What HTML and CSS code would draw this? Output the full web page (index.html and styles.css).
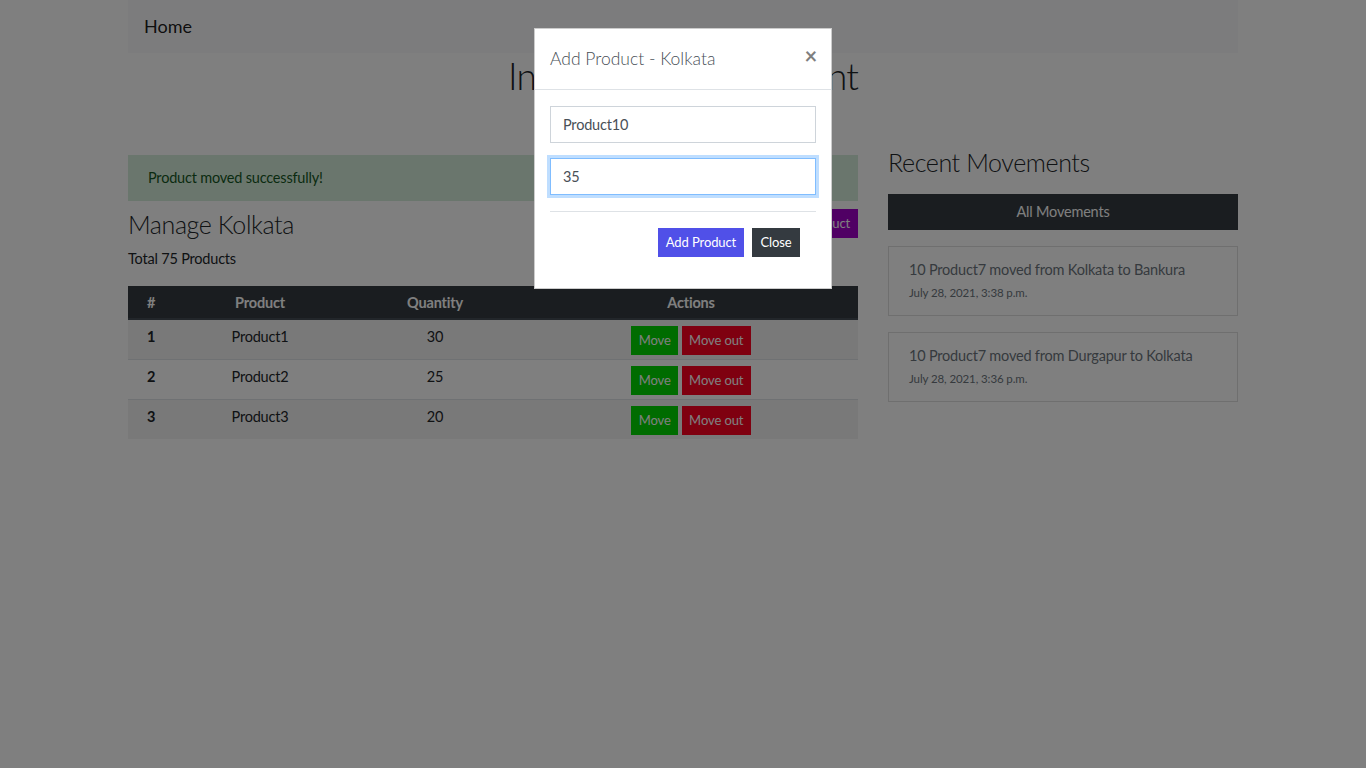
FILE: index.html
```html
<!DOCTYPE html>
<html lang="en">
<head>
<meta charset="utf-8">
<title>Inventory Management</title>
<link rel="stylesheet" href="styles.css">
</head>
<body>
<div class="container">
  <nav class="navbar"><a class="nav-link" href="#">Home</a></nav>
  <h1 class="page-title">Inventory Management</h1>
  <div class="row">
    <div class="col-main">
      <div class="alert">Product moved successfully!</div>
      <div class="manage-head">
        <h3 class="section-title">Manage Kolkata</h3>
        <button class="btn btn-purple">Add Product</button>
      </div>
      <p class="total">Total 75 Products</p>
      <table class="table">
        <thead>
          <tr><th class="c-num">#</th><th class="c-prod">Product</th><th class="c-qty">Quantity</th><th>Actions</th></tr>
        </thead>
        <tbody>
          <tr class="odd"><th>1</th><td>Product1</td><td>30</td><td><button class="btn btn-green">Move</button> <button class="btn btn-red">Move out</button></td></tr>
          <tr><th>2</th><td>Product2</td><td>25</td><td><button class="btn btn-green">Move</button> <button class="btn btn-red">Move out</button></td></tr>
          <tr class="odd"><th>3</th><td>Product3</td><td>20</td><td><button class="btn btn-green">Move</button> <button class="btn btn-red">Move out</button></td></tr>
        </tbody>
      </table>
    </div>
    <div class="col-side">
      <h3 class="section-title side-title">Recent Movements</h3>
      <div class="all-bar">All Movements</div>
      <div class="card">
        <div class="card-text">10 Product7 moved from Kolkata to Bankura</div>
        <div class="card-date">July 28, 2021, 3:38 p.m.</div>
      </div>
      <div class="card">
        <div class="card-text">10 Product7 moved from Durgapur to Kolkata</div>
        <div class="card-date">July 28, 2021, 3:36 p.m.</div>
      </div>
    </div>
  </div>
</div>

<div class="backdrop"></div>
<div class="modal">
  <div class="modal-header">
    <h5 class="modal-title">Add Product - Kolkata</h5>
    <span class="modal-close">&times;</span>
  </div>
  <div class="modal-body">
    <input class="form-control" type="text" value="Product10">
    <input class="form-control focused" type="text" value="35" autofocus>
    <hr class="divider">
    <div class="modal-actions">
      <button class="btn btn-blue">Add Product</button>
      <button class="btn btn-dark">Close</button>
    </div>
  </div>
</div>
</body>
</html>
```

FILE: styles.css
```css
* { box-sizing: border-box; }

html, body {
  margin: 0;
  padding: 0;
  background: #ffffff;
  font-family: Lato, "Noto Sans", sans-serif;
  font-size: 14.5px;
  letter-spacing: -0.2px;
  color: #212529;
  line-height: 1.5;
}

.container {
  width: 1110px;
  margin: 0 auto;
}

.navbar {
  height: 53px;
  background: #f8f9fa;
  display: flex;
  align-items: center;
  padding: 0 16px;
}

.nav-link {
  font-size: 18px;
  letter-spacing: 0;
  color: rgba(0, 0, 0, 0.9);
  text-decoration: none;
}

.page-title {
  margin: 0;
  font-size: 37px;
  font-weight: 300;
  letter-spacing: -1px;
  line-height: 46px;
  text-align: center;
}

.row {
  display: flex;
  gap: 30px;
  margin-top: 47px;
}

.col-main { width: 730px; }
.col-side { width: 350px; }

.alert {
  margin-top: 9px;
  height: 46px;
  padding: 0 20px;
  display: flex;
  align-items: center;
  background: #d4edda;
  color: #155724;
}

.manage-head {
  display: flex;
  justify-content: space-between;
  align-items: flex-start;
  margin-top: 6px;
}

.section-title {
  margin: 0;
  font-size: 25px;
  font-weight: 300;
  letter-spacing: -0.4px;
  line-height: 34px;
}

.side-title { margin-top: -1px; margin-bottom: 15px; }

.total {
  margin: 6px 0 15px;
  line-height: 24px;
}

.btn {
  border: 0;
  font-family: inherit;
  font-size: 13px;
  letter-spacing: -0.1px;
  color: #ffffff;
  height: 29px;
  padding: 0;
  line-height: 29px;
  text-align: center;
  cursor: pointer;
}

.btn-purple { background: #a000c8; margin-top: 2px; width: 86px; }
.btn-green { background: #00d800; width: 47px; }
.btn-red { background: #ff0020; width: 69px; }
.btn-blue { background: #5050e8; width: 86px; }
.btn-dark { background: #343a40; width: 48px; }

.table {
  width: 100%;
  border-collapse: collapse;
  text-align: center;
}

.table thead th {
  background: #343a40;
  color: #ffffff;
  font-weight: 700;
  padding: 5px 8px 3px;
  line-height: 24px;
  border-bottom: 2px solid #454d55;
}

.c-num { width: 46px; }
.c-prod { width: 172px; }
.c-qty { width: 178px; }

.table tbody th,
.table tbody td {
  padding: 6px 8px 4px;
  line-height: 22px;
  vertical-align: top;
  border-top: 1px solid #dee2e6;
}

.table tbody tr:first-child th,
.table tbody tr:first-child td { border-top: 0; }

.table tbody th { font-weight: 700; }

.table tbody tr.odd { background: rgba(0, 0, 0, 0.05); }

.table tbody td .btn { vertical-align: top; }

.all-bar {
  height: 36px;
  background: #343a40;
  color: #ffffff;
  display: flex;
  align-items: center;
  justify-content: center;
  margin-bottom: 16px;
}

.card {
  border: 1px solid rgba(0, 0, 0, 0.125);
  padding: 11px 20px 12px;
  margin-bottom: 16px;
  height: 70px;
}

.card-text {
  color: #6c757d;
  line-height: 24px;
}

.card-date {
  color: #6c757d;
  font-size: 11.5px;
  letter-spacing: -0.1px;
  line-height: 22px;
}

.backdrop {
  position: fixed;
  inset: 0;
  background: rgba(0, 0, 0, 0.5);
}

.modal {
  position: fixed;
  top: 28px;
  left: 534px;
  width: 298px;
  height: 261px;
  background: #ffffff;
  border: 1px solid rgba(0, 0, 0, 0.2);
}

.modal-header {
  height: 61px;
  border-bottom: 1px solid #dee2e6;
  display: flex;
  align-items: center;
  justify-content: space-between;
  padding: 0 15px 0 15px;
}

.modal-title {
  margin: 0;
  font-size: 17.5px;
  font-weight: 300;
  letter-spacing: 0;
  color: #495057;
}

.modal-close {
  font-size: 22px;
  font-weight: 700;
  color: #000;
  opacity: 0.5;
  line-height: 1;
  margin-top: -6px;
  margin-right: -1px;
}

.modal-body {
  padding: 16px 15px;
}

.form-control {
  display: block;
  width: 100%;
  height: 37px;
  padding: 0 12px;
  font-family: inherit;
  font-size: 14.5px;
  letter-spacing: -0.2px;
  color: #495057;
  border: 1px solid #ced4da;
  background: #fff;
  margin: 0 0 15px;
  outline: none;
}

.form-control.focused {
  border-color: #80bdff;
  box-shadow: 0 0 0 3px rgba(0, 123, 255, 0.25);
}

.divider {
  border: 0;
  border-top: 1px solid #dee2e6;
  margin: 16px 0 16px;
}

.modal-actions {
  display: flex;
  justify-content: flex-end;
  gap: 8px;
  padding-right: 16px;
}
```
